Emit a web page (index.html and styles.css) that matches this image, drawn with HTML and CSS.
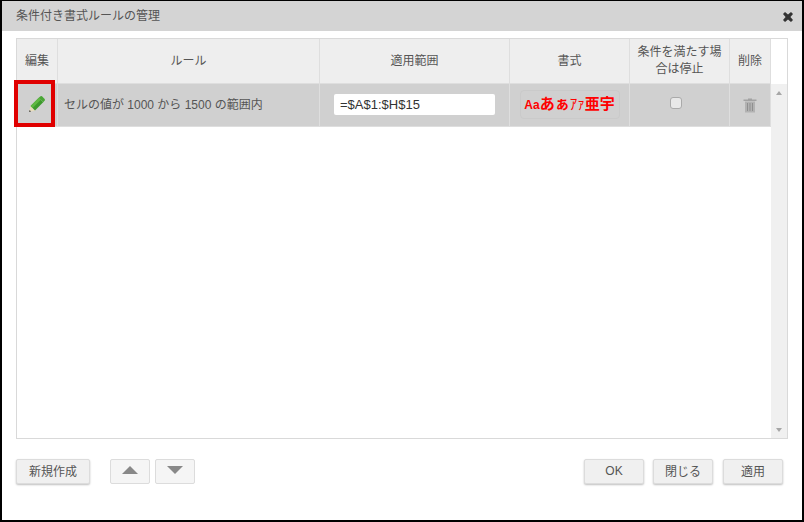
FILE: index.html
```html
<!DOCTYPE html>
<html lang="ja">
<head>
<meta charset="utf-8">
<title>条件付き書式ルールの管理</title>
<link rel="stylesheet" href="styles.css">
</head>
<body>
<div class="dialog">
  <div class="titlebar">
    <span class="title">条件付き書式ルールの管理</span>
    <svg class="close" width="10" height="10" viewBox="0 0 10 10"><path d="M2 0 L5 2.6 L8 0 L10 2 L7.4 5 L10 8 L8 10 L5 7.4 L2 10 L0 8 L2.6 5 L0 2 Z" fill="#333"/></svg>
  </div>
  <div class="content">
    <div class="panel">
      <div class="rules">
        <div class="row head">
          <div class="cell">編集</div>
          <div class="cell">ルール</div>
          <div class="cell">適用範囲</div>
          <div class="cell">書式</div>
          <div class="cell stop">条件を満たす場合は停止</div>
          <div class="cell">削除</div>
        </div>
        <div class="row rule">
          <div class="cell edit">
            <svg width="18" height="18" viewBox="0 0 18 18">
              <path d="M1 17 L2.6 11 L7 15.4 Z" fill="#e8dcbc"/>
              <path d="M1 17 L1.6 14.9 L3.1 16.4 Z" fill="#444"/>
              <path d="M2.6 11 L10.8 2.8 L15.2 7.2 L7 15.4 Z" fill="#3d9a2c"/>
              <path d="M2.6 11 L10.8 2.8 L12.8 4.8 L4.6 13 Z" fill="#5fb842"/>
              <path d="M10.8 2.8 L12.5 1.3 Q13.3 0.8 14 1.3 L16.7 4 Q17.2 4.8 16.7 5.5 L15.2 7.2 Z" fill="#4aa636"/>
            </svg>
          </div>
          <div class="cell desc">セルの値が 1000 から 1500 の範囲内</div>
          <div class="cell range"><input class="range-input" type="text" value="=$A$1:$H$15"></div>
          <div class="cell"><div class="preview"><span class="latin">Aa</span>あぁ<span class="kana">ｱｧ</span>亜宇</div></div>
          <div class="cell"><span class="check"></span></div>
          <div class="cell">
            <svg width="14" height="15" viewBox="0 0 14 15">
              <path d="M5 0.5 H9 V1.5 H13.5 V3 H0.5 V1.5 H5 Z" fill="#a2a2a2"/>
              <path d="M2 3.5 H12 V14.5 H2 Z" fill="#b2b2b2"/>
              <path d="M4.5 5 V13 M7 5 V13 M9.5 5 V13" stroke="#8f8f8f" stroke-width="1"/>
            </svg>
          </div>
        </div>
      </div>
      <div class="scrollbar">
        <span class="tri-up small"></span>
        <span class="tri-down small"></span>
      </div>
      <div class="marker"></div>
    </div>
    <div class="footer">
      <div class="group">
        <button class="btn new">新規作成</button>
        <button class="btn arrow first"><span class="tri-up"></span></button>
        <button class="btn arrow"><span class="tri-down"></span></button>
      </div>
      <div class="group">
        <button class="btn act">OK</button>
        <button class="btn act">閉じる</button>
        <button class="btn act last">適用</button>
      </div>
    </div>
  </div>
</div>
</body>
</html>
```
FILE: styles.css
```css
* { box-sizing: border-box; }
html, body { margin: 0; padding: 0; background: #fff; }
body {
  font-family: "Liberation Sans", "Noto Sans CJK JP", sans-serif;
  font-size: 12px;
  color: #555;
}
.dialog {
  width: 804px;
  height: 522px;
  border: solid #000;
  border-width: 1px 2px 2px;
  display: flex;
  flex-direction: column;
  overflow: hidden;
}
.titlebar {
  height: 30px;
  flex: none;
  background: #d4d4d4;
  display: flex;
  align-items: center;
  justify-content: space-between;
  padding: 0 9px 0 14px;
}
.title { color: #555; margin-bottom: 4px; }
.close { margin-top: 1px; }
.content {
  flex: 1;
  display: flex;
  flex-direction: column;
  padding: 7px 14px 0;
}
.panel {
  position: relative;
  width: 772px;
  height: 401px;
  border: 1px solid #d9d9d9;
  display: flex;
  flex: none;
}
.rules { width: 754px; flex: none; }
.row {
  display: grid;
  grid-template-columns: 41px 262px 190px 120px 100px 41px;
}
.cell {
  display: flex;
  align-items: center;
  justify-content: center;
  text-align: center;
  border-right: 1px solid #dedede;
  border-bottom: 1px solid #dedede;
  line-height: 16px;
}
.head { height: 45px; }
.head .cell { background: #eeeeee; }
.head .stop { padding: 0 4px; line-height: 17px; }
.rule { height: 43px; }
.rule .cell { background: #d0d0d0; }
.rule .desc { justify-content: flex-start; padding-left: 6px; }
.edit svg { margin: 0 1px 2px 0; }
.range-input {
  width: 161px;
  height: 21px;
  border: 0;
  border-radius: 2px;
  background: #fff;
  padding: 0 6px;
  font: 13px "Liberation Sans", sans-serif;
  color: #333;
  margin-bottom: 2px;
  outline: none;
}
.preview {
  width: 100px;
  height: 29px;
  border: 1px solid #cacaca;
  border-radius: 4px;
  display: flex;
  align-items: center;
  justify-content: center;
  color: #f00;
  font-weight: bold;
  font-size: 15px;
  white-space: nowrap;
  margin-bottom: 2px;
}
.latin { font-size: 12px; padding-top: 2px; }
.kana { font-weight: normal; }
.check {
  width: 12px;
  height: 12px;
  margin: 0 8px 4px 0;
  border: 1px solid #aaa;
  border-radius: 3px;
  background: #e8e8e8;
}
.scrollbar {
  flex: 1;
  margin-top: 45px;
  background: #f0f0f0;
  display: flex;
  flex-direction: column;
  align-items: center;
  justify-content: space-between;
  padding: 7px 0 6px;
}
.tri-up, .tri-down {
  display: block;
  width: 0;
  height: 0;
  border-left: 8px solid transparent;
  border-right: 8px solid transparent;
}
.tri-up { border-bottom: 8px solid #888; }
.tri-down { border-top: 8px solid #888; }
.tri-up.small, .tri-down.small {
  border-left-width: 3.5px;
  border-right-width: 3.5px;
}
.tri-up.small { border-bottom: 4px solid #a6a6a6; }
.tri-down.small { border-top: 4px solid #a6a6a6; }
.marker {
  position: absolute;
  left: -3px;
  top: 41px;
  width: 41px;
  height: 47px;
  border: 4px solid #e00000;
}
.footer {
  display: flex;
  justify-content: space-between;
  margin-top: 20px;
  padding-right: 5px;
}
.group { display: flex; }
.btn {
  height: 25px;
  padding: 0 0 2px;
  border: 1px solid #dcdcdc;
  border-radius: 2px;
  background: #f0f0f0;
  box-shadow: 0 1px 2px rgba(0, 0, 0, 0.25);
  font: 12px "Liberation Sans", "Noto Sans CJK JP", sans-serif;
  color: #555;
  display: flex;
  align-items: center;
  justify-content: center;
}
.new { width: 74px; }
.arrow {
  width: 40px;
  background: #f5f5f5;
  box-shadow: none;
  margin-left: 5px;
  padding-bottom: 3px;
}
.arrow.first { margin-left: 20px; }
.act { width: 60px; margin-left: 9px; }
.act:first-child { margin-left: 0; }
.act.last { margin-left: 10px; }
```
